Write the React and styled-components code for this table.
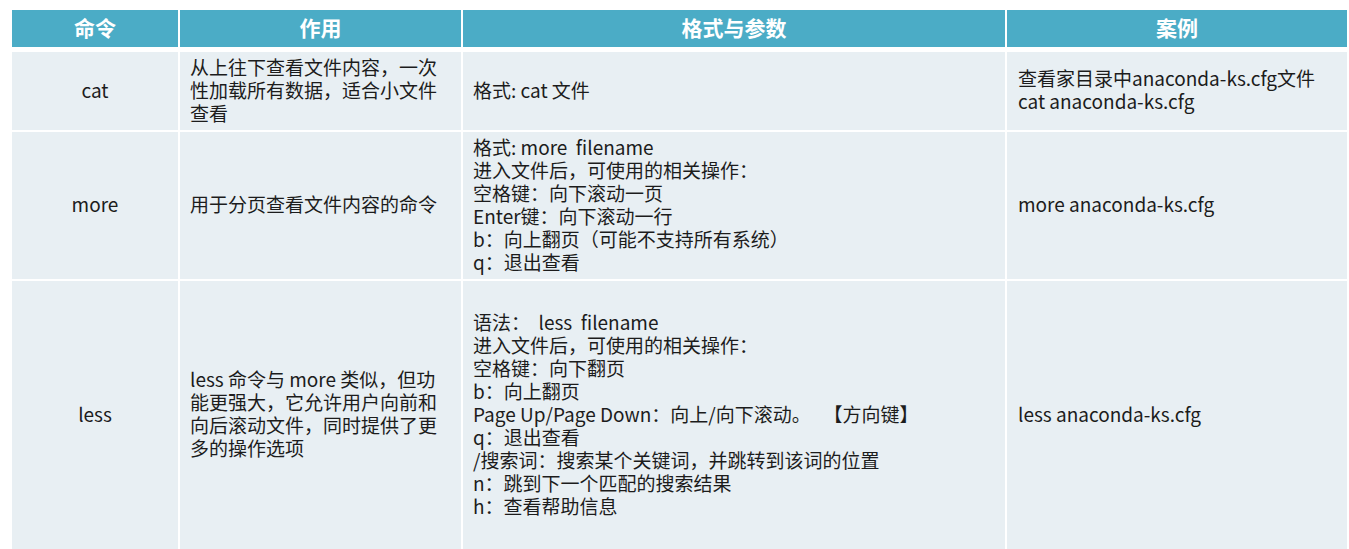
import React from 'react';
import styled, { createGlobalStyle } from 'styled-components';

const GlobalStyle = createGlobalStyle`
  body {
    margin: 0;
    background: #ffffff;
    font-family: "Noto Sans CJK SC", "Noto Sans", sans-serif;
    text-spacing-trim: space-all;
  }
`;

const columns = ['命令', '作用', '格式与参数', '案例'];

const rows = [
    {
        height: 78,
        cmd: 'cat',
        use: '从上往下查看文件内容，一次性加载所有数据，适合小文件查看',
        format: ['格式: cat 文件'],
        example: ['查看家目录中anaconda-ks.cfg文件', 'cat anaconda-ks.cfg'],
    },
    {
        height: 147,
        cmd: 'more',
        use: '用于分页查看文件内容的命令',
        format: [
            '格式: more  filename',
            '进入文件后，可使用的相关操作：',
            '空格键：向下滚动一页',
            'Enter键：向下滚动一行',
            'b：向上翻页（可能不支持所有系统）',
            'q：退出查看',
        ],
        example: ['more anaconda-ks.cfg'],
    },
    {
        height: 268,
        cmd: 'less',
        use: 'less 命令与 more 类似，但功能更强大，它允许用户向前和向后滚动文件，同时提供了更多的操作选项',
        format: [
            '语法：  less  filename',
            '进入文件后，可使用的相关操作：',
            '空格键：向下翻页',
            'b：向上翻页',
            'Page Up/Page Down：向上/向下滚动。   【方向键】',
            'q：退出查看',
            '/搜索词：搜索某个关键词，并跳转到该词的位置',
            'n：跳到下一个匹配的搜索结果',
            'h：查看帮助信息',
        ],
        example: ['less anaconda-ks.cfg'],
    },
];

const App = () => {
    return (
        <>
            <GlobalStyle />
            <Page>
                <Table $rows={rows.map((r) => r.height)}>
                    {columns.map((c) => (
                        <HeaderCell key={c}>{c}</HeaderCell>
                    ))}
                    {rows.map((r) => (
                        <React.Fragment key={r.cmd}>
                            <Cell $center>{r.cmd}</Cell>
                            <Cell>{r.use}</Cell>
                            <Cell>
                                {r.format.map((line) => (
                                    <Line key={line}>{line}</Line>
                                ))}
                            </Cell>
                            <Cell $pad={11}>
                                {r.example.map((line) => (
                                    <Line key={line}>{line}</Line>
                                ))}
                            </Cell>
                        </React.Fragment>
                    ))}
                </Table>
            </Page>
        </>
    );
};

// Styled components
const Page = styled.div`
  padding: 10px 2px 0 12px;
  height: 549px;
  box-sizing: border-box;
  overflow: hidden;
`;

const Table = styled.div`
  display: grid;
  grid-template-columns: 166px 281px 542px 340px;
  grid-template-rows: 40px ${(p) => p.$rows.map((h) => `${h}px`).join(' ')};
  column-gap: 2px;
  row-gap: 2px;
`;

const HeaderCell = styled.div`
  height: 37px;
  box-sizing: border-box;
  padding-bottom: 3px;
  align-self: start;
  background: #4bacc6;
  color: #ffffff;
  font-size: 21px;
  font-weight: 700;
  display: flex;
  align-items: center;
  justify-content: center;
`;

const Cell = styled.div`
  background: #e8eff3;
  color: #1c1c1c;
  font-size: 19px;
  line-height: 23px;
  padding: 0 10px 4px ${(p) => p.$pad || 10}px;
  display: flex;
  flex-direction: column;
  justify-content: center;
  align-items: ${(p) => (p.$center ? 'center' : 'flex-start')};
  text-align: ${(p) => (p.$center ? 'center' : 'left')};
`;

const Line = styled.div`
  white-space: pre-wrap;
`;

export default App;
